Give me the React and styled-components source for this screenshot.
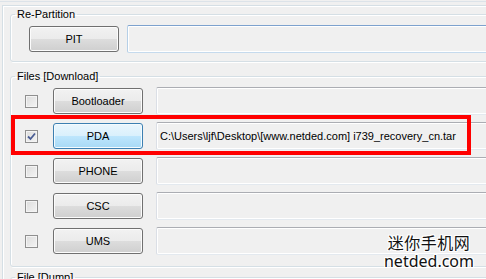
import React from 'react';
import styled, { createGlobalStyle } from 'styled-components';

const GlobalStyle = createGlobalStyle`
  html, body {
    margin: 0;
    padding: 0;
    background: #f0f0f0;
    overflow: hidden;
  }
  body {
    width: 486px;
    height: 279px;
    font-family: 'Liberation Sans', Arial, sans-serif;
    font-size: 11px;
    color: #000;
  }
`;

const Page = styled.div`
  position: relative;
  width: 486px;
  height: 279px;
  overflow: hidden;
  padding-top: 1px;
  box-sizing: border-box;
`;

const TopRule = styled.div`
  height: 3px;
  border-top: 1px solid #dce3e9;
`;

const Frame = styled.div`
  margin-left: 2px;
  border-top: 1px solid #d5dfe5;
  border-left: 1px solid #d5dfe5;
  box-shadow: inset 1px 1px 0 #fff;
  padding: 1px 0 0 7px;
  height: 300px;
`;

const Group = styled.fieldset`
  margin: ${({ $gap }) => $gap || 0}px 0 0 0;
  padding: 0;
  min-inline-size: 0;
  width: 600px;
  border: 1px solid #d5dfe5;
  border-radius: 3px;
  box-shadow: inset 1px 1px 0 #fff, 1px 1px 0 #fff;
`;

const Legend = styled.legend`
  margin-left: 4px;
  padding: 0 2px;
  line-height: 14px;
  font-size: 11px;
`;

const Rows = styled.div`
  display: flex;
  flex-direction: column;
  gap: 7px;
  padding: ${({ $top }) => $top}px 0 ${({ $bottom }) => $bottom}px ${({ $left }) => $left}px;
`;

const Row = styled.div`
  display: flex;
  align-items: center;
  height: 28px;
  gap: ${({ $gap }) => $gap}px;
`;

const CheckBox = styled.span`
  flex: none;
  width: 13px;
  height: 13px;
  box-sizing: border-box;
  border: 1px solid #8f8f8f;
  background: linear-gradient(135deg, #dcdcdc 0%, #f4f4f4 100%);
  box-shadow: inset 0 0 0 1px #f4f4f4;
  display: flex;
  align-items: center;
  justify-content: center;
  margin-right: 2px;
`;

const Button = styled.div`
  flex: none;
  width: ${({ $w }) => $w}px;
  height: 26px;
  box-sizing: border-box;
  border: 1px solid ${({ $active }) => ($active ? '#3c7fb1' : '#707070')};
  border-radius: 3px;
  background: ${({ $active }) =>
    $active
      ? 'linear-gradient(#eaf6fd 0%, #d9f0fc 50%, #bee6fd 50%, #a7d9f5 100%)'
      : 'linear-gradient(#f2f2f2 0%, #ebebeb 50%, #dddddd 50%, #cfcfcf 100%)'};
  box-shadow: inset 0 0 0 1px ${({ $active }) => ($active ? '#f4fbfe' : '#fcfcfc')};
  display: flex;
  align-items: center;
  justify-content: center;
  font-size: 11px;
`;

const Field = styled.div`
  flex: 1;
  height: 28px;
  box-sizing: border-box;
  border: 1px solid;
  border-color: ${({ $accent }) =>
    $accent ? '#7da2ce #b5cfe7 #c5daed #b5cfe7' : '#abadb3 #e2e3ea #e3e9ef #dbdfe6'};
  border-radius: 2px;
  box-shadow: inset 0 0 0 1px #fff;
  background: #f0f0f0;
  padding: 0 3px;
  display: flex;
  align-items: center;
  white-space: nowrap;
  overflow: hidden;
  font-size: 11px;
`;

const Highlight = styled.div`
  position: absolute;
  left: 11px;
  top: 115px;
  width: 460px;
  height: 40px;
  box-sizing: border-box;
  border: 4px solid #ff0000;
  pointer-events: none;
`;

const Watermark = styled.div`
  position: absolute;
  right: 12px;
  top: 232px;
  display: flex;
  flex-direction: column;
  align-items: center;
  color: #111;
  font-family: 'Noto Sans CJK SC', 'Noto Sans', sans-serif;
  text-shadow: 1px 0 #fff, -1px 0 #fff, 0 1px #fff, 0 -1px #fff, 1px 1px #fff, -1px -1px #fff,
    1px -1px #fff, -1px 1px #fff;
`;

const WatermarkCn = styled.span`
  font-size: 16px;
  line-height: 20px;
  letter-spacing: 0.5px;
`;

const WatermarkEn = styled.span`
  font-family: 'Noto Sans', sans-serif;
  font-size: 16px;
  line-height: 18px;
`;

const Check = () => (
  <svg width="9" height="9" viewBox="0 0 9 9">
    <path d="M1 4.5 L3.5 7 L8 1.5" fill="none" stroke="#4a5d94" strokeWidth="1.8" />
  </svg>
);

const files = [
  { name: 'Bootloader' },
  { name: 'PDA', checked: true, active: true, path: 'C:\\Users\\ljf\\Desktop\\[www.netded.com] i739_recovery_cn.tar' },
  { name: 'PHONE' },
  { name: 'CSC' },
  { name: 'UMS' },
];

export default function App() {
  return (
    <Page>
      <GlobalStyle />
      <TopRule />
      <Frame>
        <Group>
          <Legend>Re-Partition</Legend>
          <Rows $top={4} $bottom={8} $left={18}>
            <Row $gap={8}>
              <Button $w={90}>PIT</Button>
              <Field $accent />
            </Row>
          </Rows>
        </Group>
        <Group $gap={7}>
          <Legend>Files [Download]</Legend>
          <Rows $top={4} $bottom={11} $left={14}>
            {files.map((f) => (
              <Row key={f.name} $gap={13}>
                <CheckBox>{f.checked && <Check />}</CheckBox>
                <Button $w={90} $active={f.active}>
                  {f.name}
                </Button>
                <Field>{f.path}</Field>
              </Row>
            ))}
          </Rows>
        </Group>
        <Group $gap={3}>
          <Legend>File [Dump]</Legend>
          <Rows $top={4} $bottom={8} $left={14} />
        </Group>
      </Frame>
      <Highlight />
      <Watermark>
        <WatermarkCn>迷你手机网</WatermarkCn>
        <WatermarkEn>netded.com</WatermarkEn>
      </Watermark>
    </Page>
  );
}
